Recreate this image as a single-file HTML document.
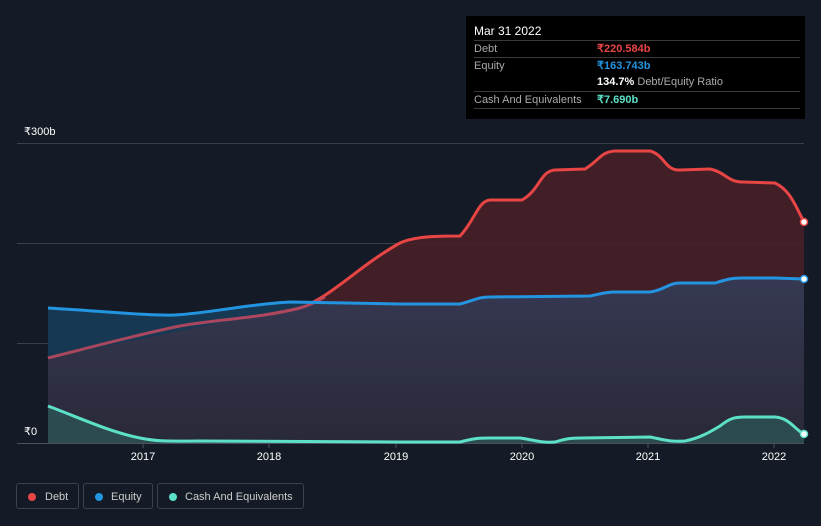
<!DOCTYPE html><html><head><style>
body{margin:0;width:821px;height:526px;background:#151b26;font-family:"Liberation Sans",sans-serif;overflow:hidden;position:relative}
.tt{position:absolute;left:466px;top:16px;width:339px;height:103px;background:#000;color:#fff;font-size:11px}
.tt .r{position:absolute;left:8px;width:326px;border-top:1px solid #3a3a3a;height:17px;line-height:17px}
.lab{color:#aaa}
.v{position:absolute;left:123px;font-weight:bold}
.ax{position:absolute;color:#fff;font-size:11px}
.lg{position:absolute;top:483px;height:26px;border:1px solid #3a4150;border-radius:3px;color:#ccc;font-size:11px;line-height:26px;box-sizing:border-box}
.lg i{position:absolute;left:11px;top:9px;width:8px;height:8px;border-radius:50%}
</style></head><body>
<div class="tt">
<div style="position:absolute;left:8px;top:8px;font-size:12px">Mar 31 2022</div>
<div class="r" style="top:24px"><span class="lab">Debt</span><span class="v" style="color:#e84545">₹220.584b</span></div>
<div class="r" style="top:41px"><span class="lab">Equity</span><span class="v" style="color:#2394e0">₹163.743b</span></div>
<div class="r" style="top:58px;border-top:none"><span class="v">134.7% <span style="color:#aaa;font-weight:normal">Debt/Equity Ratio</span></span></div>
<div class="r" style="top:75px"><span class="lab">Cash And Equivalents</span><span class="v" style="color:#5de0c8">₹7.690b</span></div>
<div class="r" style="top:92px;height:0"></div>
</div>
<div class="ax" style="left:24px;top:125px">₹300b</div>
<svg width="821" height="526" style="position:absolute;left:0;top:0">
<defs><linearGradient id="eg" x1="0" y1="0" x2="0" y2="1"><stop offset="0" stop-color="#353c58"/><stop offset="1" stop-color="#262a3a"/></linearGradient></defs>
<g stroke="#3a3f4a" stroke-width="1"><line x1="17" y1="143.5" x2="804" y2="143.5"/><line x1="17" y1="243.5" x2="804" y2="243.5"/><line x1="17" y1="343.5" x2="804" y2="343.5"/><line x1="17" y1="443.5" x2="804" y2="443.5" stroke="#4a505c"/></g>
<g stroke="#4a505c"><line x1="143" y1="443" x2="143" y2="448"/><line x1="269" y1="443" x2="269" y2="448"/><line x1="396" y1="443" x2="396" y2="448"/><line x1="522" y1="443" x2="522" y2="448"/><line x1="648" y1="443" x2="648" y2="448"/><line x1="774" y1="443" x2="774" y2="448"/></g>
<path d="M48,358 C80,350 140,334 180,326 C220,319 260,318 300,308 C330,298 360,265 400,243 C415,236 440,236 460,236 C475,220 478,201 490,200 L522,200 C540,190 540,171 555,170 L585,169 C600,160 600,152 615,151 L650,151 C665,155 665,171 680,170 L710,169 C725,172 728,182 742,182 L775,183 C790,190 795,205 804,222 L804,443 L48,443Z" fill="#4a1f27" opacity="0.85"/>
<path d="M48,358 C80,350 140,334 180,326 C220,319 260,318 300,308 C330,298 360,265 400,243 C415,236 440,236 460,236 C475,220 478,201 490,200 L522,200 C540,190 540,171 555,170 L585,169 C600,160 600,152 615,151 L650,151 C665,155 665,171 680,170 L710,169 C725,172 728,182 742,182 L775,183 C790,190 795,205 804,222" fill="none" stroke="#e84545" stroke-width="3"/>
<path d="M48,308 C100,311 150,316 175,315 C210,313 250,304 290,302 L400,304 L460,304 C475,300 478,297 490,297 L590,296 C600,294 605,292 615,292 L650,292 C665,290 668,283 680,283 L715,283 C725,280 730,278 742,278 L775,278 L804,279 L804,443 L48,443Z" fill="url(#eg)" opacity="0.9"/>
<path d="M48,308 C100,311 150,316 175,315 C210,313 250,304 290,302 L320,302 L48,358Z" fill="#123a55" opacity="0.8"/>
<path d="M48,358 C80,350 140,334 180,326 C220,319 260,318 300,308 C310,305 318,301 325,297" fill="none" stroke="#c24a60" stroke-width="3" opacity="0.85"/>
<path d="M48,308 C100,311 150,316 175,315 C210,313 250,304 290,302 L400,304 L460,304 C475,300 478,297 490,297 L590,296 C600,294 605,292 615,292 L650,292 C665,290 668,283 680,283 L715,283 C725,280 730,278 742,278 L775,278 L804,279" fill="none" stroke="#2394e0" stroke-width="3"/>
<path d="M48,406 C80,418 110,432 140,438 C160,442 170,441 200,441 L400,442 L460,442 C475,438 480,438 490,438 L520,438 C535,440 540,443 555,442 C565,439 570,438 580,438 L650,437 C665,440 670,442 685,441 C700,438 710,432 720,426 C730,418 735,417 745,417 L775,417 C790,418 795,430 804,434 L804,443 L48,443Z" fill="#2e5a5a" opacity="0.7"/>
<path d="M48,406 C80,418 110,432 140,438 C160,442 170,441 200,441 L400,442 L460,442 C475,438 480,438 490,438 L520,438 C535,440 540,443 555,442 C565,439 570,438 580,438 L650,437 C665,440 670,442 685,441 C700,438 710,432 720,426 C730,418 735,417 745,417 L775,417 C790,418 795,430 804,434" fill="none" stroke="#5de0c8" stroke-width="3"/>
<rect x="17" y="420" width="30" height="22" fill="#151b26"/>
<text x="24" y="435" fill="#fff" font-size="11" font-family="Liberation Sans">₹0</text>
<circle cx="804" cy="222" r="3.5" fill="#fff" stroke="#e84545" stroke-width="1.5"/>
<circle cx="804" cy="279" r="3.5" fill="#fff" stroke="#2394e0" stroke-width="1.5"/>
<circle cx="804" cy="434" r="3.5" fill="#fff" stroke="#5de0c8" stroke-width="1.5"/>
<g fill="#fff" font-size="11" text-anchor="middle" font-family="Liberation Sans"><text x="143" y="460">2017</text><text x="269" y="460">2018</text><text x="396" y="460">2019</text><text x="522" y="460">2020</text><text x="648" y="460">2021</text><text x="774" y="460">2022</text></g>
</svg>
<div class="lg" style="left:16px;width:63px"><i style="background:#e84545"></i><span style="position:absolute;left:28px">Debt</span></div>
<div class="lg" style="left:83px;width:70px"><i style="background:#2394e0"></i><span style="position:absolute;left:27px">Equity</span></div>
<div class="lg" style="left:157px;width:147px"><i style="background:#5de0c8"></i><span style="position:absolute;left:27px">Cash And Equivalents</span></div>
</body></html>
